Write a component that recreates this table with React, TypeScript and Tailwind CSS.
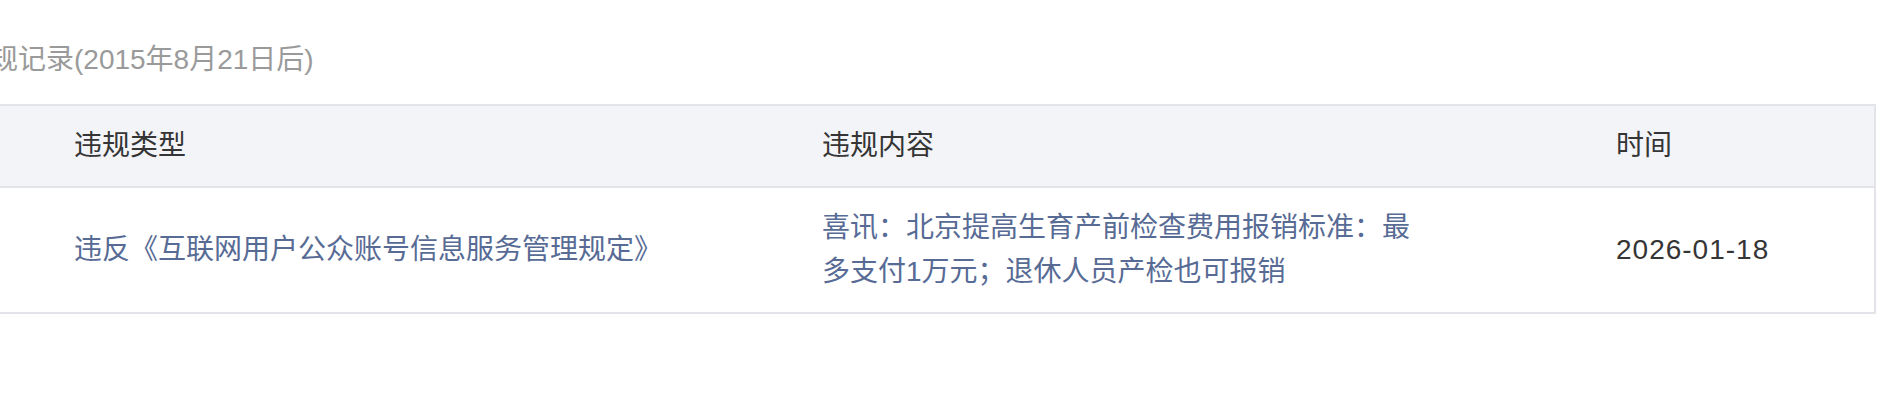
import React from "react";

const font = {
  fontFamily: '"Liberation Sans", "Noto Sans CJK SC", sans-serif',
};

export default function App() {
  return (
    <div className="w-[1880px] h-[420px] bg-white overflow-hidden" style={font}>
      <div className="ml-[-38px] w-[1914px] pt-[40px]">
        <div className="text-[28px] leading-[40px] text-[#9a9a9a]">
          违规记录(2015年8月21日后)
        </div>
        <div className="mt-[24px] border-2 border-[#e3e4e9]">
          <div className="grid grid-cols-[818px_794px_1fr] h-[82px] bg-[#f3f4f8] text-[28px] text-[#353535] items-center border-b-2 border-[#e3e4e9]">
            <div className="pl-[110px]">违规类型</div>
            <div className="pl-[40px]">违规内容</div>
            <div className="pl-[40px]">时间</div>
          </div>
          <div className="grid grid-cols-[818px_794px_1fr] h-[124px] text-[28px] items-center">
            <div className="pl-[110px] text-[#576b95] leading-[44px]">
              违反《互联网用户公众账号信息服务管理规定》
            </div>
            <div className="pl-[40px] pr-[150px] text-[#576b95] leading-[44px]">
              喜讯：北京提高生育产前检查费用报销标准：最多支付1万元；退休人员产检也可报销
            </div>
            <div className="pl-[40px] text-[#353535] leading-[44px] tracking-[1px]">
              2026-01-18
            </div>
          </div>
        </div>
      </div>
    </div>
  );
}
